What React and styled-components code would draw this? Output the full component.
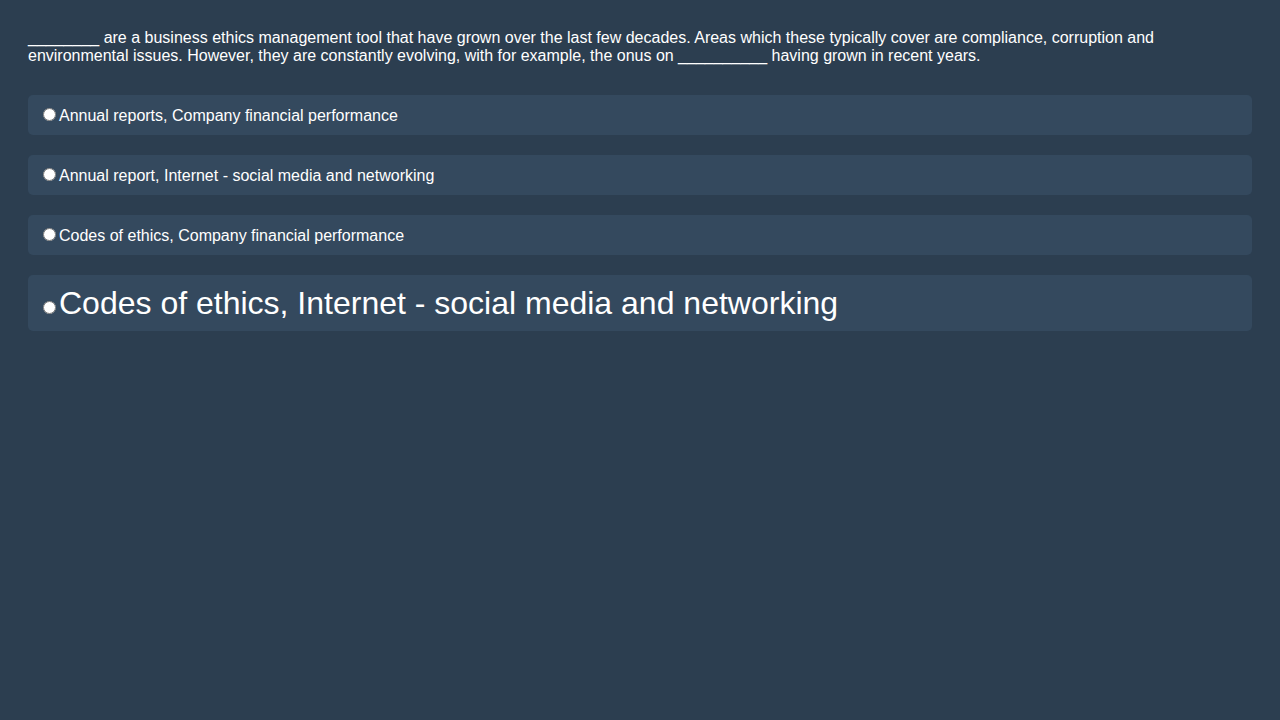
import React from 'react'
import styled, { createGlobalStyle } from 'styled-components'

const GlobalStyle = createGlobalStyle`
  html, body {
    margin: 0;
    background: #2c3e50;
  }
  body {
    font-family: "Liberation Sans", Arial, sans-serif;
    color: #fff;
  }
`

const Quiz = styled.div`
  padding: 29px 28px 28px;
`

const Question = styled.p`
  margin: 0 0 30px;
  font-size: 16px;
  line-height: 18px;
`

const Options = styled.div`
  display: flex;
  flex-direction: column;
  gap: 20px;
`

const Option = styled.label`
  display: block;
  padding: 10px;
  background: #34495e;
  border-radius: 5px;
  font-size: ${(p) => (p.$big ? '32px' : '16px')};
  line-height: ${(p) => (p.$big ? '36px' : '19px')};
  cursor: pointer;
`

const Radio = styled.input`
  margin: 3px 3px 0 5px;
  width: 13px;
  height: 13px;
`

const options = [
  'Annual reports, Company financial performance',
  'Annual report, Internet - social media and networking',
  'Codes of ethics, Company financial performance',
  'Codes of ethics, Internet - social media and networking',
]

export default function App() {
  return (
    <Quiz>
      <GlobalStyle />
      <Question>
        ________ are a business ethics management tool that have grown over the last few decades. Areas which these typically cover are compliance, corruption and environmental issues. However, they are constantly evolving, with for example, the onus on __________ having grown in recent years.
      </Question>
      <Options>
        {options.map((text, i) => (
          <Option key={text} $big={i === 3}>
            <Radio type="radio" name="answer" />
            {text}
          </Option>
        ))}
      </Options>
    </Quiz>
  )
}
